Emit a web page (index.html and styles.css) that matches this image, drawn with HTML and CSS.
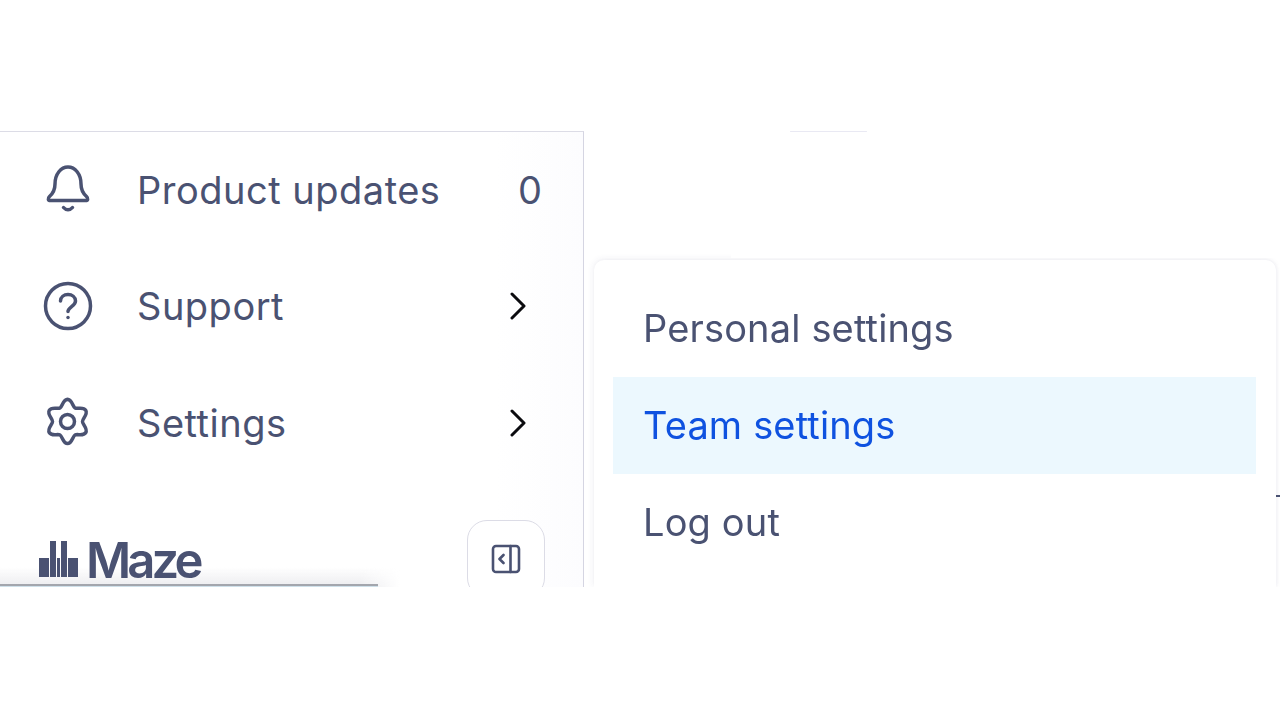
FILE: index.html
```html
<!DOCTYPE html>
<html lang="en">
<head>
<meta charset="utf-8">
<title>Maze menu</title>
<link rel="stylesheet" href="styles.css">
</head>
<body>
<div class="stage">
  <aside class="sidebar">
    <nav class="rows">
      <div class="row">
        <svg class="icon" viewBox="0 0 48 48" fill="none" stroke="#4a5272" stroke-width="3.500" stroke-linecap="round" stroke-linejoin="round"><path d="M11 18C11 8 17 1 24 1S37 8 37 18C37 24 38.500 27 42.500 30.500C44.500 32.500 44 34.500 41.500 34.500H6.500C4 34.500 3.500 32.500 5.500 30.500C9.500 27 11 24 11 18Z"/><path d="M19.500 41.500C22 44.500 26 44.500 28.500 41.500"/></svg>
        <span class="label">Product updates</span>
        <span class="count">0</span>
      </div>
      <div class="row">
        <svg class="icon" viewBox="0 0 48 48" fill="none" stroke="#4a5272" stroke-width="3.500" stroke-linecap="round" stroke-linejoin="round"><circle cx="24" cy="24" r="22.500"/><path d="M16.500 19C16.500 15 20 12.500 24 12.500C28 12.500 31.500 15 31.500 19C31.500 24 24 25 24 29.500"/><path d="M24 35.500V35.600"/></svg>
        <span class="label">Support</span>
        <svg class="chev" viewBox="0 0 18 28" fill="none" stroke="#0b0b0f" stroke-width="3" stroke-linecap="round" stroke-linejoin="round"><path d="M3 2L15 14 3 26"/></svg>
      </div>
      <div class="row">
        <svg class="icon" viewBox="0 0 48 48" fill="none" stroke="#4a5272" stroke-width="3.500" stroke-linecap="round" stroke-linejoin="round"><path stroke-width="3.900" transform="translate(2.400 .4) scale(.88 .92)" d="M24 0C29 0 29.900 7.780 32.500 9.280C35.100 10.780 42.280 7.670 44.780 12C47.280 16.330 41 21 41 24C41 27 47.280 31.670 44.780 36C42.280 40.330 35.100 37.220 32.500 38.720C29.900 40.220 29 48 24 48C19 48 18.100 40.220 15.500 38.720C12.900 37.220 5.720 40.330 3.220 36C.72 31.670 7 27 7 24C7 21 .72 16.330 3.220 12C5.720 7.670 12.900 10.780 15.500 9.280C18.100 7.780 19 0 24 0Z"/><circle cx="23.500" cy="22.500" r="7"/></svg>
        <span class="label">Settings</span>
        <svg class="chev" viewBox="0 0 18 28" fill="none" stroke="#0b0b0f" stroke-width="3" stroke-linecap="round" stroke-linejoin="round"><path d="M3 2L15 14 3 26"/></svg>
      </div>
    </nav>
    <footer class="foot">
      <div class="brand">
        <svg class="mark" viewBox="0 0 39 36" fill="#4a5272"><path d="M0 17h10v19H0zM11 0h6v36h-6zM18 17h3v19h-3zM22 0h6v36h-6zM29 17h10v19H29z"/></svg>
        <span class="word">Maze</span>
      </div>
      <button class="collapse" aria-label="Collapse">
        <svg class="panel" viewBox="0 0 30 30" fill="none" stroke="#4a5272" stroke-width="2.600" stroke-linecap="round" stroke-linejoin="round"><rect x="2" y="2" width="26" height="26" rx="3"/><path d="M19.500 2V28M12.500 11L8.500 15 12.500 19"/></svg>
      </button>
    </footer>
    <div class="bottom-fade"></div>
    <div class="bottom-bar"></div>
  </aside>
  <section class="menu">
    <div class="item">Personal settings</div>
    <div class="item active">Team settings</div>
    <div class="item">Log out</div>
    <span class="tick"></span>
  </section>
  <div class="mask"><span class="stub"></span></div>
</div>
</body>
</html>
```
FILE: styles.css
```css
* { box-sizing: border-box; }
html, body { margin: 0; height: 100%; background: #fff; overflow: hidden; }
body { padding-top: 131px; font-family: Inter, "Liberation Sans", sans-serif; color: #4a5272; }
.stage { position: relative; height: 456px; display: flex; align-items: flex-start; overflow: hidden; filter: blur(.45px); }
.sidebar {
  position: relative;
  width: 584px; height: 456px; flex: none;
  overflow: hidden;
  border-top: 1px solid #dcdce6;
  border-right: 1px solid #d5d5e2;
  background: linear-gradient(90deg, #fff 0 85%, #fcfcfe 100%);
  display: flex; flex-direction: column;
}
.rows { display: flex; flex-direction: column; margin-top: -.5px; }
.row { height: 116.500px; display: flex; align-items: center; padding: 0 41px 0 44px; }
.icon { width: 48px; height: 48px; flex: none; margin-right: 45px; overflow: visible; }
.label { flex: 1; font-size: 38px; letter-spacing: .5px; }
.count { font-size: 38px; }
.chev { width: 18px; height: 28px; flex: none; margin-right: 15px; }
.foot { position: relative; z-index: 1; display: flex; align-items: flex-start; justify-content: space-between; padding: 39px 38px 0 39px; }
.brand { display: flex; align-items: center; gap: 8px; height: 36px; margin-top: 21px; }
.mark { width: 39px; height: 36px; flex: none; }
.word { font-size: 49px; font-weight: 600; letter-spacing: -3.900px; line-height: 1; padding-right: 4px; position: relative; top: 1px; }
.collapse {
  width: 78px; height: 78px; padding: 0; flex: none;
  border: 1px solid #dcdce6; border-radius: 20px; background: #fff;
  display: flex; align-items: center; justify-content: center;
}
.panel { width: 30px; height: 30px; }
.bottom-fade {
  position: absolute; left: 0; bottom: 0; width: 400px; height: 20px;
  background: linear-gradient(180deg, rgba(235,235,238,0), #ececef);
  -webkit-mask-image: linear-gradient(90deg, #000 90%, transparent);
  mask-image: linear-gradient(90deg, #000 90%, transparent);
}
.bottom-bar {
  position: absolute; z-index: 2; left: 0; bottom: 0; width: 378px; height: 3px;
  background: linear-gradient(180deg, #a3a6ad 0 66%, #cfe0ea 66%);
}
.menu {
  position: relative;
  width: 682px; height: 327px; margin: 129px 0 0 10px; flex: none;
  padding: 20px 20px 0 19px;
  border-radius: 10px 10px 0 0;
  background: #fff;
  box-shadow: -1px -1px 6px rgba(60,60,110,.07), 1px 0 4px rgba(60,60,110,.05);
}
.item { height: 97px; display: flex; align-items: center; padding: 0 0 2px 30px; font-size: 38px; letter-spacing: .15px; }
.item.active { background: #ecf8fe; color: #0f52e0; }
.tick { position: absolute; right: -4px; top: 235px; width: 4px; height: 2px; background: #4a5272; }
.mask { position: absolute; left: 731px; top: 0; right: 0; height: 127px; background: #fff; }
.stub { position: absolute; left: 59px; top: 0; width: 77px; height: 1px; background: #e9e9f3; border-radius: 4px; }
```
